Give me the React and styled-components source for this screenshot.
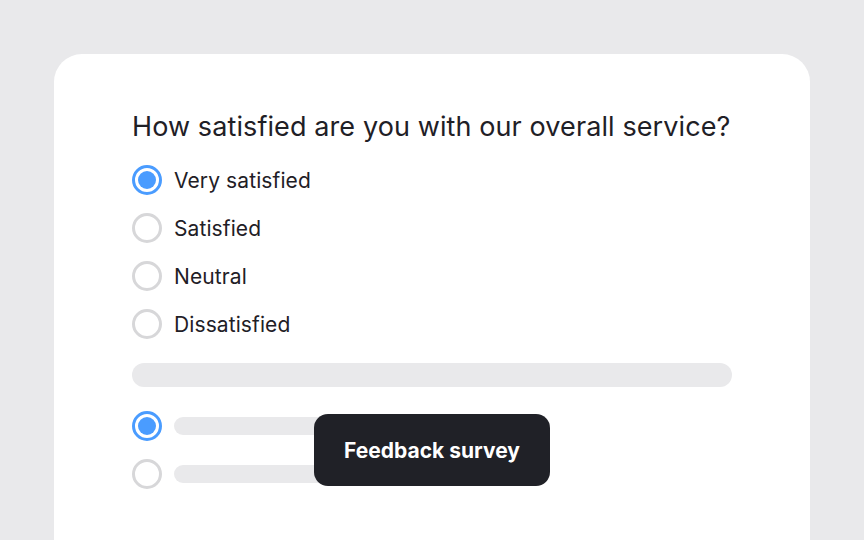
import React from "react";
import styled, { createGlobalStyle } from "styled-components";

const Global = createGlobalStyle`
  html, body { margin: 0; padding: 0; }
  body {
    background: #e9e9eb;
    font-family: Inter, "Noto Sans", sans-serif;
    width: 864px;
    height: 540px;
    overflow: hidden;
  }
`;

const Page = styled.div`
  padding: 54px 54px 0 54px;
  height: 540px;
  box-sizing: border-box;
`;

const Card = styled.div`
  position: relative;
  background: #ffffff;
  border-radius: 28px 28px 0 0;
  height: 486px;
  padding: 55px 78px 0 78px;
  box-sizing: border-box;
`;

const Heading = styled.h1`
  margin: 0 0 20px 0;
  font-size: 27px;
  font-weight: 400;
  line-height: 36px;
  color: #1f2026;
  letter-spacing: 0.1px;
  white-space: nowrap;
`;

const Options = styled.div`
  display: flex;
  flex-direction: column;
  gap: 18px;
`;

const Option = styled.label`
  display: flex;
  align-items: center;
  gap: 12px;
  height: 30px;
  font-size: 21px;
  color: #1f2026;
  letter-spacing: 0.1px;
`;

const Radio = styled.span`
  width: 30px;
  height: 30px;
  box-sizing: border-box;
  border-radius: 50%;
  border: 3px solid ${(p) => (p.$checked ? "#4a9cff" : "#d7d7d9")};
  flex: none;
  display: flex;
  align-items: center;
  justify-content: center;
  &::after {
    content: "";
    width: 18px;
    height: 18px;
    border-radius: 50%;
    background: ${(p) => (p.$checked ? "#4a9cff" : "transparent")};
  }
`;

const Bar = styled.div`
  height: ${(p) => p.$h}px;
  width: ${(p) => p.$w}px;
  border-radius: ${(p) => p.$h / 2}px;
  background: #e9e9eb;
`;

const Skeleton = styled.div`
  margin-top: 24px;
  display: flex;
  flex-direction: column;
`;

const SkeletonOptions = styled.div`
  margin-top: 24px;
  display: flex;
  flex-direction: column;
  gap: 18px;
`;

const SkeletonRow = styled.div`
  display: flex;
  align-items: center;
  gap: 12px;
  height: 30px;
`;

const Tooltip = styled.div`
  position: absolute;
  left: 260px;
  top: 360px;
  width: 236px;
  height: 72px;
  border-radius: 14px;
  background: #202127;
  color: #ffffff;
  font-size: 21px;
  font-weight: 700;
  display: flex;
  align-items: center;
  justify-content: center;
`;

const options = [
  { label: "Very satisfied", checked: true },
  { label: "Satisfied" },
  { label: "Neutral" },
  { label: "Dissatisfied" },
];

export default function App() {
  return (
    <>
      <Global />
      <Page>
        <Card>
          <Heading>How satisfied are you with our overall service?</Heading>
          <Options>
            {options.map((o) => (
              <Option key={o.label}>
                <Radio $checked={o.checked} />
                {o.label}
              </Option>
            ))}
          </Options>
          <Skeleton>
            <Bar $h={24} $w={600} />
            <SkeletonOptions>
              <SkeletonRow>
                <Radio $checked />
                <Bar $h={18} $w={220} />
              </SkeletonRow>
              <SkeletonRow>
                <Radio />
                <Bar $h={18} $w={200} />
              </SkeletonRow>
            </SkeletonOptions>
          </Skeleton>
          <Tooltip>Feedback survey</Tooltip>
        </Card>
      </Page>
    </>
  );
}
